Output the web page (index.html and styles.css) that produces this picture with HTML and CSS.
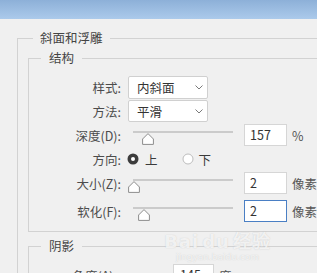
FILE: index.html
```html
<!DOCTYPE html>
<html lang="zh-CN">
<head>
<meta charset="utf-8">
<title>斜面和浮雕</title>
<link rel="stylesheet" href="styles.css">
</head>
<body>
<div class="titlebar"></div>
<fieldset class="outer">
  <legend class="outer-legend">斜面和浮雕</legend>
  <fieldset class="group">
    <legend class="group-legend">结构</legend>
    <div class="rows">
      <div class="row">
        <span class="lbl">样式:</span>
        <div class="select sel-tall"><span>内斜面</span><svg class="chev" width="8" height="5" viewBox="0 0 8 5"><path d="M0.5 0.5 L4 4 L7.5 0.5" fill="none" stroke="#7a7a7a" stroke-width="1"/></svg></div>
      </div>
      <div class="row">
        <span class="lbl">方法:</span>
        <div class="select"><span>平滑</span><svg class="chev" width="8" height="5" viewBox="0 0 8 5"><path d="M0.5 0.5 L4 4 L7.5 0.5" fill="none" stroke="#7a7a7a" stroke-width="1"/></svg></div>
      </div>
      <div class="row">
        <span class="lbl">深度(D):</span>
        <div class="slider"><div class="track"></div><svg class="thumb" style="left:15px" width="12" height="12" viewBox="0 0 12 12"><path d="M6 0.6 L11.4 6 L11.4 11.4 L0.6 11.4 L0.6 6 Z" fill="#fff" stroke="#8c8c8c" stroke-width="1" stroke-linejoin="round"/></svg></div>
        <div class="num">157</div>
        <span class="unit">%</span>
      </div>
      <div class="row">
        <span class="lbl">方向:</span>
        <svg class="radio" width="12" height="12" viewBox="0 0 12 12"><circle cx="6" cy="6" r="5.5" fill="#3c3c3c"/><circle cx="6" cy="6" r="2" fill="#fff"/></svg>
        <span class="radio-lbl">上</span>
        <svg class="radio radio-2" width="12" height="12" viewBox="0 0 12 12"><circle cx="6" cy="6" r="5" fill="#fff" stroke="#bdbdbd" stroke-width="1"/></svg>
        <span class="radio-lbl">下</span>
      </div>
      <div class="row">
        <span class="lbl">大小(Z):</span>
        <div class="slider"><div class="track"></div><svg class="thumb" style="left:1px" width="12" height="12" viewBox="0 0 12 12"><path d="M6 0.6 L11.4 6 L11.4 11.4 L0.6 11.4 L0.6 6 Z" fill="#fff" stroke="#8c8c8c" stroke-width="1" stroke-linejoin="round"/></svg></div>
        <div class="num">2</div>
        <span class="unit">像素</span>
      </div>
      <div class="row row-last">
        <span class="lbl">软化(F):</span>
        <div class="slider"><div class="track"></div><svg class="thumb" style="left:11px" width="12" height="12" viewBox="0 0 12 12"><path d="M6 0.6 L11.4 6 L11.4 11.4 L0.6 11.4 L0.6 6 Z" fill="#fff" stroke="#8c8c8c" stroke-width="1" stroke-linejoin="round"/></svg></div>
        <div class="num focused">2</div>
        <span class="unit">像素</span>
      </div>
    </div>
  </fieldset>
  <fieldset class="group shadow">
    <legend class="group-legend">阴影</legend>
    <div class="rows">
      <div class="row">
        <span class="lbl lbl-angle">角度(A):</span>
        <div class="num num-angle">145</div>
        <span class="unit">度</span>
      </div>
    </div>
  </fieldset>
</fieldset>
<div class="watermark">
  <div class="wm-main">Bai<span class="wm-du">du</span>经验</div>
  <div class="wm-sub">jingyan.baidu.com</div>
</div>
</body>
</html>
```

FILE: styles.css
```css
html, body {
  margin: 0;
  padding: 0;
}
body {
  width: 317px;
  height: 273px;
  overflow: hidden;
  background: #f0f0f0;
  font-family: "Noto Sans CJK SC", "Noto Sans", sans-serif;
  font-size: 12.5px;
  color: #444;
  position: relative;
}
.titlebar {
  height: 19px;
  background: linear-gradient(#8db0d8, #abcaeb);
}
.outer {
  margin: 10px 0 0 17px;
  padding: 2px 0 0 10px;
  border: 1px solid #d2d2d2;
  border-right: none;
  width: 420px;
  min-width: 0;
}
.outer-legend {
  margin-left: 5px;
  padding: 0 7px;
  line-height: 18px;
}
.group {
  margin: 0;
  padding: 0 0 9px 0;
  border: 1px solid #d2d2d2;
  border-right: none;
  min-width: 0;
}
.group-legend {
  margin-left: 12px;
  padding: 0 8px;
  line-height: 18px;
}
.shadow {
  margin-top: 5px;
  padding-bottom: 0;
}
.rows {
  display: flex;
  flex-direction: column;
  gap: 2px;
  padding-top: 9px;
}
.row {
  display: flex;
  align-items: center;
  height: 22px;
}
.row-last {
  margin-top: 4px;
}
.lbl {
  width: 92px;
  margin-right: 6px;
  text-align: right;
  white-space: nowrap;
  color: #4c4c4c;
}
.select {
  margin-left: 1px;
  border: 1px solid #d0d0d0;
  border-radius: 2px;
  background: #fff;
  display: flex;
  align-items: center;
  justify-content: space-between;
  padding: 0 3px 0 8px;
  box-sizing: border-box;
  width: 80px;
  height: 22px;
  color: #333;
}
.sel-tall {
  height: 23px;
}
.chev {
  display: block;
  margin-right: 1px;
}
.slider {
  position: relative;
  width: 112px;
  height: 22px;
}
.track {
  margin: 7px 6px 0;
  height: 2px;
  background: #cbcbcb;
}
.thumb {
  position: absolute;
  top: 9px;
  display: block;
}
.num {
  margin-left: 5px;
  width: 43px;
  height: 22px;
  box-sizing: border-box;
  border: 1px solid #d6d6d6;
  background: #fff;
  padding-left: 5px;
  line-height: 20px;
  color: #333;
}
.num.focused {
  border-color: #4a7fc4;
}
.unit {
  margin-left: 5px;
  color: #555;
  white-space: nowrap;
}
.radio {
  display: block;
  flex: none;
}
.radio-lbl {
  margin-left: 6px;
  color: #3a3a3a;
}
.radio-2 {
  margin-left: 24px;
}
.radio-2 + .radio-lbl {
  margin-left: 5px;
}
.lbl-angle {
  width: 88px;
}
.num-angle {
  margin-left: 50px;
  width: 41px;
  padding-left: 6px;
}
.watermark {
  position: absolute;
  left: 150px;
  top: 232px;
  width: 135px;
  text-align: center;
  color: rgba(255, 255, 255, 0.75);
  text-shadow: 0 0 1px rgba(170, 170, 170, 0.6);
  pointer-events: none;
}
.wm-main {
  font-family: "DejaVu Sans", sans-serif;
  font-weight: bold;
  font-size: 18px;
  line-height: 20px;
  letter-spacing: 1px;
}
.wm-du {
  margin: 0 3px;
}
.wm-sub {
  font-family: "DejaVu Sans", sans-serif;
  font-size: 9px;
  line-height: 11px;
}
```
